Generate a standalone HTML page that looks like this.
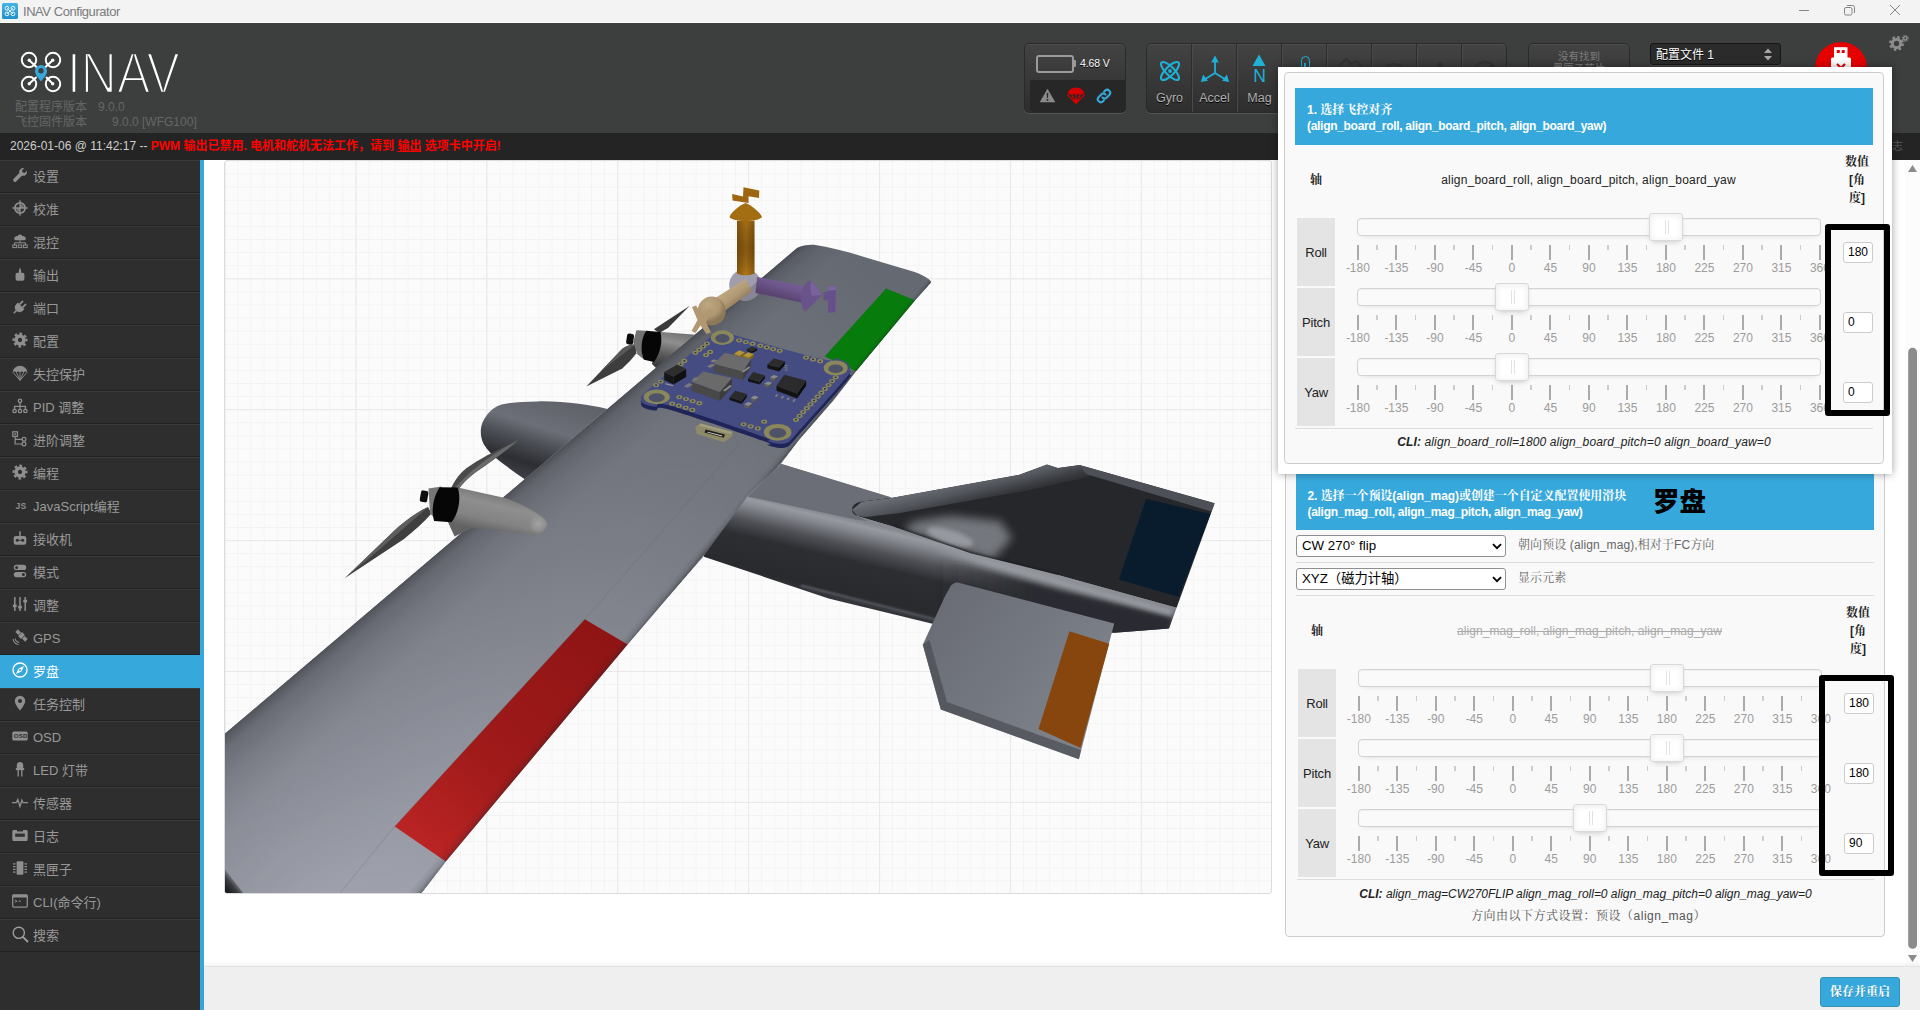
<!DOCTYPE html>
<html lang="zh-CN">
<head>
<meta charset="utf-8">
<title>INAV Configurator</title>
<style>
*{box-sizing:border-box;margin:0;padding:0}
html,body{width:1920px;height:1010px;overflow:hidden;background:#fff}
body{position:relative;font-family:"Liberation Sans","Noto Sans CJK SC",sans-serif;font-size:12px;color:#222}
.abs{position:absolute}
.serif{font-family:"Liberation Sans","Noto Serif CJK SC",serif}
/* title bar */
#titlebar{left:0;top:0;width:1920px;height:23px;background:#f3f3f3;border-bottom:1px solid #fff}
#titlebar .ttl{left:23px;top:1px;height:22px;line-height:22px;font-size:13px;letter-spacing:-.45px;color:#7b7b7b;white-space:nowrap}
/* header */
#header{left:0;top:23px;width:1920px;height:110px;background:#3d3f3e;overflow:hidden}
#log{left:0;top:133px;width:1920px;height:27px;background:#242424;overflow:hidden}
#log .t{left:10px;top:1px;line-height:25px;font-size:12px;color:#cfcfcf;white-space:nowrap}
#log .t b{color:#f00;font-weight:bold}

#inavtxt{left:66.500px;top:19.500px;font-size:58px;line-height:60px;color:#fff;letter-spacing:0;-webkit-text-stroke:2.400px #3d3f3e;paint-order:fill stroke;white-space:nowrap;transform:scaleX(.86);transform-origin:0 0}
.ver{font-size:12px;line-height:15px;color:#666;white-space:nowrap}
.hbox{border-radius:5px;background:linear-gradient(#434343,#2e2e2e);border:1px solid #2a2a2a;box-shadow:0 1px 0 rgba(255,255,255,.12),inset 0 1px 0 rgba(255,255,255,.06)}
.sep{top:0;width:2px;height:68px;background:#2c2c2c;border-right:1px solid #4a4a4a}
.slbl{top:47px;width:45px;text-align:center;font-size:12.500px;color:#b0b0b0;text-shadow:0 1px #000;line-height:15px}
/*PCSS_START*/
/* panels */
.gbox{border:1px solid #ccc;border-radius:4px;background:#f9f9f9}
.bluehd{background:#37a8db}
.hdtxt{color:#fff;font-weight:bold;font-size:12px;line-height:16.200px;white-space:nowrap;letter-spacing:-.3px}
.hline{height:1px;background:#ddd}
.thb{font-weight:bold;font-size:12px;line-height:18px;text-align:center;color:#222}
.thm{font-size:12px;line-height:18px;text-align:center;color:#222;white-space:nowrap;letter-spacing:.06px}
.lcell{height:68px;background:#e4e4e4;line-height:70px;text-align:center;font-size:13px;color:#222;letter-spacing:-.2px}
.track{height:18px;border:1px solid #d3d3d3;border-radius:4px;background:#fafafa;box-shadow:inset 0 1px 1px #f0f0f0,0 3px 6px -5px #bbb}
.ticks{width:1px;height:1px}
.ticks i{position:absolute;top:0;display:block}
.ticks i.mj{width:2px;height:15px;background:#aaa}
.ticks i.mn{width:1.600px;height:5px;background:#ccc}
.ticks span{position:absolute;top:17px;width:40px;text-align:center;font-size:12px;line-height:12px;color:#9c9c9c}
.handle{width:33.500px;height:27.500px;border:1px solid #d9d9d9;border-radius:3px;background:#fff;box-shadow:inset 0 0 1px #fff,inset 0 1px 7px #ebebeb,0 3px 6px -3px #bbb}
.handle i{position:absolute;left:14.500px;top:6px;width:1px;height:14px;background:#e3e3e3}
.inp{width:30px;height:21.500px;border:1px solid #ccc;border-radius:3px;background:#fff;font-size:12px;line-height:19px;padding-left:4px;color:#000}
.cli{font-style:italic;font-size:12px;line-height:17px;text-align:center;white-space:nowrap;color:#222;letter-spacing:.13px}
.note{font-size:12px;line-height:17px;text-align:center;color:#555;white-space:nowrap;letter-spacing:.5px}
.blackrect{border:6px solid #000;border-radius:3px}
.sel{width:210px;height:22px;border:1px solid #8f8f8f;border-radius:3px;background:#fff;font-size:13.300px;line-height:20px;padding-left:5px;color:#000;white-space:nowrap}
.sellbl{font-size:12px;line-height:18px;color:#666;white-space:nowrap;letter-spacing:.1px}
#bigann{left:1653px;top:483px;font-size:26.500px;line-height:38px;font-weight:900;color:#000;white-space:nowrap}
#popup{background:#fff;box-shadow:0 0 8px rgba(0,0,0,.38)}
/*PCSS_END*/
.wl{left:0;top:0;width:1920px;height:1010px}
/* sidebar */
#side{left:0;top:160px;width:200px;height:850px;background:#2e2e2e}
#side ul{list-style:none}
#side li{height:33px;border-top:1px solid #3b3b3b;border-bottom:1px solid #222;position:relative;color:#999;font-size:13px;line-height:31px;padding-left:33px;white-space:nowrap}
#side li.act{background:#37a8db;color:#fff;border-top-color:#37a8db;border-bottom-color:#37a8db}
#side li svg{position:absolute;left:12.300px;top:6.200px;width:16px;height:16px;overflow:visible}
#stripe{left:200px;top:160px;width:4px;height:850px;background:#37a8db}
/* content */
#content{left:204px;top:160px;width:1716px;height:806px;background:#fff;overflow:hidden}
#footer{left:204px;top:966px;width:1716px;height:44px;background:#efefef;border-top:1px solid #e4e4e4;box-shadow:0 -2px 4px rgba(0,0,0,.06)}
#savebtn{left:1820px;top:977px;width:80px;height:30px;background:#37a8db;border:1px solid #3394b5;border-radius:3px;color:#fff;font-weight:bold;font-size:12px;line-height:28px;text-align:center;text-shadow:0 1px rgba(0,0,0,.25)}
</style>
</head>
<body>
<!-- TITLEBAR -->
<div id="titlebar" class="abs">
  <svg class="abs" style="left:2px;top:3px" width="16" height="16" viewBox="0 0 16 16"><defs><linearGradient id="tig" x1="0" y1="0" x2="0" y2="1"><stop offset="0" stop-color="#45b4e6"/><stop offset="1" stop-color="#1f8fcb"/></linearGradient></defs><rect width="16" height="16" rx="1.5" fill="url(#tig)"/><g fill="none" stroke="#e8f6fd" stroke-width="1"><circle cx="5" cy="5.3" r="1.9"/><circle cx="11" cy="5.3" r="1.9"/><circle cx="5" cy="10.9" r="1.9"/><circle cx="11" cy="10.9" r="1.9"/><path d="M5 5.3 11 10.9M11 5.3 5 10.9"/></g></svg>
  <div class="abs ttl">INAV Configurator</div>
  <svg class="abs" style="left:1790px;top:0" width="130" height="22" viewBox="0 0 130 22" fill="none" stroke="#858585" stroke-width="1"><path d="M9 10.5h10"/><rect x="54.5" y="7.5" width="7.5" height="7.5" rx="1.5"/><path d="M57 5.5h5.5a2 2 0 0 1 2 2V13"/><path d="M100 5l10 10M110 5l-10 10"/></svg>
</div>
<!-- HEADER -->
<div id="header" class="abs">
  <!-- logo -->
  <svg class="abs" style="left:18px;top:26px" width="48" height="48" viewBox="0 0 48 48" fill="none" stroke="#fff" stroke-width="2">
    <circle cx="11" cy="11" r="7.2"/><circle cx="35" cy="11" r="7.2"/><circle cx="11" cy="35" r="7.2"/><circle cx="35" cy="35" r="7.2"/>
    <path d="M11.5 11.5 19 18.5M34.500 11.500 27.500 18M11.500 34.500 18 28.500M34.500 34.500 28.500 28.500" stroke-linecap="round"/>
    <circle cx="11.300" cy="11.300" r="1.700" fill="#fff" stroke="none"/><circle cx="34.700" cy="11.300" r="1.700" fill="#fff" stroke="none"/><circle cx="11.300" cy="34.700" r="1.700" fill="#fff" stroke="none"/><circle cx="34.700" cy="34.700" r="1.700" fill="#fff" stroke="none"/>
    <path d="M23 32.500c-3.200-4.200-6-7.200-6-10.600a6 6 0 0 1 12 0c0 3.400-2.800 6.400-6 10.600z" fill="#37a8db" stroke="none"/><circle cx="23" cy="21.800" r="2.700" fill="#3d3f3e" stroke="none"/>
  </svg>
  <div class="abs" id="inavtxt">INAV</div>
  <div class="abs ver" style="left:15px;top:77px">配置程序版本<span style="margin-left:11px">9.0.0</span></div>
  <div class="abs ver" style="left:15px;top:92px">飞控固件版本<span style="margin-left:25px">9.0.0 [WFG100]</span></div>
  <!-- battery box -->
  <div class="abs hbox" style="left:1024px;top:20px;width:102px;height:70px">
    <div class="abs" style="left:5px;top:36px;width:96px;height:32px;background:#272727;border-radius:0 0 4px 4px"></div>
    <div class="abs" style="left:11px;top:11px;width:38px;height:18px;border:2px solid #9a9a9a;border-radius:3px"></div>
    <div class="abs" style="left:49px;top:16px;width:2px;height:7px;background:#9a9a9a;border-radius:0 1px 1px 0"></div>
    <div class="abs" style="left:55px;top:13px;font-size:10.500px;color:#fff;text-shadow:0 1px #000;letter-spacing:-.1px;white-space:nowrap">4.68 V</div>
    <svg class="abs" style="left:14px;top:44px" width="17" height="15" viewBox="0 0 17 15"><path d="M8.500.8 16.300 14.200H.7z" fill="#8a8a8a"/><path d="M7.700 5h1.600l-.3 5h-1zM7.700 11h1.600v1.700H7.700z" fill="#272727"/></svg>
    <svg class="abs" style="left:42px;top:43px" width="18" height="17" viewBox="0 0 18 17"><path d="M.6 7.800A8.400 7.400 0 0 1 17.400 7.800Q15.300 6.500 13.200 7.800 11.100 6.500 9 7.800 6.900 6.500 4.800 7.800 2.700 6.500 .6 7.800z" fill="#d40000"/><path d="M.6 7.800 9 16.500 17.400 7.800M4.800 7.800 9 16.500 13.200 7.800M9 7.800v8.700" stroke="#d40000" stroke-width="1.200" fill="none"/><path d="M9 16.500 6.500 12.500h5z" fill="#d40000"/></svg>
    <svg class="abs" style="left:71px;top:44px" width="16" height="16" viewBox="0 0 16 16" fill="none" stroke="#37a8db" stroke-width="2" stroke-linecap="round"><path d="M6.500 9.500a3 3 0 0 0 4.300 0l2.500-2.500a3 3 0 0 0-4.300-4.300l-1 1"/><path d="M9.500 6.500a3 3 0 0 0-4.300 0l-2.500 2.500a3 3 0 0 0 4.300 4.300l1-1"/></svg>
  </div>
  <!-- sensors -->
  <div class="abs hbox" style="left:1146px;top:20px;width:361px;height:70px">
    <div class="abs sep" style="left:44px"></div><div class="abs sep" style="left:89px"></div><div class="abs sep" style="left:134px"></div><div class="abs sep" style="left:179px"></div><div class="abs sep" style="left:224px"></div><div class="abs sep" style="left:269px"></div><div class="abs sep" style="left:314px"></div>
    <svg class="abs" style="left:10px;top:14px" width="26" height="26" viewBox="0 0 26 26" fill="none" stroke="#1fb0d8" stroke-width="2.100"><ellipse cx="13" cy="13" rx="4.400" ry="12" transform="rotate(45 13 13)"/><ellipse cx="13" cy="13" rx="4.200" ry="12" transform="rotate(-45 13 13)"/><circle cx="13" cy="13" r="1.900" fill="#1fb0d8" stroke="none"/></svg>
    <svg class="abs" style="left:53px;top:11px" width="30" height="30" viewBox="0 0 30 30" fill="#1fb0d8" stroke="#1fb0d8"><path d="M15 5v13M15 18 4.500 24.500M15 18l10.500 6.500" stroke-width="1.800" fill="none"/><path d="M15 .5l3.800 7h-7.600zM.8 27l2.300-7.600 4.900 6.300zM29.200 27l-7.200-1.300 4.900-6.300z" stroke="none"/></svg>
    <svg class="abs" style="left:104px;top:10px" width="16" height="13" viewBox="0 0 16 13"><path d="M8 .5 14.500 12h-13z" fill="#1fb0d8"/></svg>
    <div class="abs" style="left:90px;top:23px;width:45px;text-align:center;font-size:17.500px;color:#1fb0d8;line-height:18px">N</div>
    <div class="abs slbl" style="left:0">Gyro</div><div class="abs slbl" style="left:45px">Accel</div><div class="abs slbl" style="left:90px">Mag</div>
    <div class="abs" style="left:153.500px;top:12px;width:9px;height:22px;border:1.600px solid #1fb0d8;border-radius:5px"></div><div class="abs" style="left:157.400px;top:19px;width:1.400px;height:12px;background:#1fb0d8"></div>
    <svg class="abs" style="left:180px;top:7px" width="181" height="30" viewBox="0 0 181 30" fill="none" stroke="#343434" stroke-width="2"><path d="M13 14l6-6 5 5 5-3 5 5"/><circle cx="67" cy="23" r="10"/><circle cx="67" cy="23" r="5"/><circle cx="113" cy="14" r="2" fill="#343434"/><path d="M107 22h12"/><circle cx="158" cy="22" r="11"/><path d="M150 28 166 14" stroke-width="3"/></svg>
  </div>
  <!-- blackbox -->
  <div class="abs hbox" style="left:1528px;top:20px;width:102px;height:70px">
    <div class="abs" style="left:0;top:6px;width:100px;text-align:center;font-size:10.500px;line-height:12px;color:#7d7d7d">没有找到<br>黑匣子芯片</div>
  </div>
  <!-- profile select -->
  <div class="abs" style="left:1650px;top:20px;width:131px;height:22px;background:#2b2b2b;border:1px solid #161616;border-radius:3px;box-shadow:0 1px 0 rgba(255,255,255,.08);color:#fff;font-size:12px;line-height:22px;padding-left:5px;text-shadow:0 1px #000">配置文件 1
    <svg class="abs" style="left:112px;top:4px" width="10" height="13" viewBox="0 0 10 13" fill="#a8a8a8"><path d="M5 .5 9 5H1zM5 12.500 9 8H1z"/></svg>
  </div>
  <!-- connect -->
  <div class="abs" style="left:1815px;top:19px;width:52px;height:52px;border-radius:26px;background:#e60000"></div>
  <svg class="abs" style="left:1829px;top:23px" width="24" height="34" viewBox="0 0 24 34"><rect x="5" y="1.200" width="13.500" height="11" fill="#fff"/><rect x="7.800" y="4" width="3" height="3" fill="#e60000"/><rect x="12.700" y="4" width="3" height="3" fill="#e60000"/><rect x="2" y="11.500" width="20" height="22" rx="1.500" fill="#fff"/><path d="M8 18l8 8M16 18l-8 8" stroke="#e60000" stroke-width="2.200"/></svg>
  <!-- gear -->
  <svg class="abs" style="left:1888px;top:11px" width="22" height="18" viewBox="0 0 22 18"><g fill="none" stroke="#8c8c8c"><circle cx="8.500" cy="9.500" r="4.200" stroke-width="3"/><circle cx="8.500" cy="9.500" r="6.300" stroke-width="2.400" stroke-dasharray="2.500 2.450"/><circle cx="17.300" cy="4.300" r="1.700" stroke-width="1.400"/><circle cx="17.300" cy="4.300" r="2.800" stroke-width="1.200" stroke-dasharray="1.100 1.100"/></g></svg>
</div>
<!-- LOG -->
<div id="log" class="abs"><div class="abs t">2026-01-06 @ 11:42:17 -- <b>PWM 输出已禁用. 电机和舵机无法工作，请到 <u>输出</u> 选项卡中开启!</b></div><div class="abs" style="right:17px;top:1px;line-height:25px;font-size:11px;color:#5c5c5c;white-space:nowrap">显示日志</div></div>
<!-- SIDEBAR -->
<div id="side" class="abs"><ul>
<li><svg viewBox="0 0 16 16"><path fill="#8f8f8f" d="M14.900 3.700 12.700 5.900 10.600 5.400 10.100 3.300 12.300 1.100A4.100 4.100 0 0 0 7.300 6.100L1.500 11.900a1.550 1.550 0 0 0 0 2.200l.4.4a1.550 1.550 0 0 0 2.200 0L9.900 8.700a4.100 4.100 0 0 0 5-5z"/></svg>设置</li>
<li><svg viewBox="0 0 16 16"><g fill="none" stroke="#8f8f8f"><circle cx="8" cy="8" r="5.200" stroke-width="1.700"/><path d="M8 .3v15.400M.3 8h15.400" stroke-width="1.300"/></g><path fill="#8f8f8f" d="M8 8V4.200A3.800 3.800 0 0 1 11.800 8zM8 8v3.800A3.800 3.800 0 0 1 4.200 8z" opacity=".75"/></svg>校准</li>
<li><svg viewBox="0 0 16 16"><path fill="#8f8f8f" d="M8 1.500a2.600 2.600 0 0 1 2.500 1.700 2.300 2.300 0 0 1 2 .3 2.300 2.300 0 0 1 .6 3.700H2.900a2.300 2.300 0 0 1 .6-3.700 2.300 2.300 0 0 1 2-.3A2.600 2.600 0 0 1 8 1.500z"/><path fill="none" stroke="#8f8f8f" stroke-width="1" d="M8 7.200v2.600M2.500 12V9.800h11V12"/><g fill="none" stroke="#8f8f8f" stroke-width="1"><rect x=".8" y="12" width="3.600" height="2.600"/><rect x="6.200" y="12" width="3.600" height="2.600"/><rect x="11.600" y="12" width="3.600" height="2.600"/></g></svg>混控</li>
<li><svg viewBox="0 0 16 16"><path fill="#8f8f8f" d="M8 1.300 9.100 4.500V7H6.900V4.500z"/><rect x="3.600" y="6.800" width="8.800" height="8" rx="1.800" fill="#8f8f8f"/></svg>输出</li>
<li><svg viewBox="0 0 16 16"><g transform="rotate(45 8 8)" fill="#8f8f8f"><path d="M3.300 6.500h9.400v2.200a4.700 4.700 0 0 1-9.400 0z"/><rect x="5" y="1.500" width="1.700" height="5.200" rx=".6"/><rect x="9.300" y="1.500" width="1.700" height="5.200" rx=".6"/><rect x="7.200" y="13" width="1.600" height="3.800"/></g></svg>端口</li>
<li><svg viewBox="0 0 16 16"><circle cx="8" cy="8" r="3.900" fill="none" stroke="#8f8f8f" stroke-width="3.500"/><circle cx="8" cy="8" r="6.400" fill="none" stroke="#8f8f8f" stroke-width="2.200" stroke-dasharray="2.600 2.427" transform="rotate(-12 8 8)"/></svg>配置</li>
<li><svg viewBox="0 0 16 16"><path fill="#8f8f8f" d="M.8 7.200A7.200 6.400 0 0 1 15.200 7.200Q13.400 6 11.600 7.200 9.800 6 8 7.200 6.200 6 4.400 7.200 2.600 6 .8 7.200z"/><path fill="none" stroke="#8f8f8f" stroke-width=".9" d="M.8 7.200 8 15.300 15.200 7.200M4.400 7.200 8 15.300 11.600 7.200M8 7.200v8"/></svg>失控保护</li>
<li><svg viewBox="0 0 16 16"><g fill="none" stroke="#8f8f8f" stroke-width="1.300"><circle cx="8" cy="2.800" r="1.700"/><circle cx="2.600" cy="13" r="1.700"/><circle cx="8" cy="13" r="1.700"/><circle cx="13.400" cy="13" r="1.700"/><path d="M8 4.500v6.800M2.600 11.300V8.300h10.800v3"/></g></svg>PID 调整</li>
<li><svg viewBox="0 0 16 16"><g fill="none" stroke="#8f8f8f" stroke-width="1.200"><rect x=".8" y=".8" width="4.600" height="4.600"/><path d="M3.100 5.400V13h7M3.100 8.300H10"/><circle cx="12" cy="8.300" r="1.900"/><circle cx="12" cy="13" r="1.900"/></g><rect x="2.300" y="2.300" width="1.600" height="1.600" fill="#8f8f8f"/></svg>进阶调整</li>
<li><svg viewBox="0 0 16 16"><circle cx="8" cy="8" r="3.900" fill="none" stroke="#8f8f8f" stroke-width="3.500"/><circle cx="8" cy="8" r="6.400" fill="none" stroke="#8f8f8f" stroke-width="2.200" stroke-dasharray="2.600 2.427" transform="rotate(-12 8 8)"/></svg>编程</li>
<li><svg viewBox="0 0 16 16"><text x="3.500" y="12" font-family="Liberation Sans,sans-serif" font-size="8.500" font-weight="bold" fill="#8f8f8f" letter-spacing=".3">JS</text></svg>JavaScript编程</li>
<li><svg viewBox="0 0 16 16"><rect x="1.700" y="6" width="12.600" height="8.700" rx="2.200" fill="#8f8f8f"/><path d="M8 6V1.200" stroke="#8f8f8f" stroke-width="1.500"/><circle cx="5.300" cy="10.300" r="1.500" fill="#2e2e2e"/><circle cx="10.700" cy="10.300" r="1.500" fill="#2e2e2e"/><path d="M5.300 10.300h5.400" stroke="#2e2e2e" stroke-width=".8"/></svg>接收机</li>
<li><svg viewBox="0 0 16 16"><rect x="1.800" y="1.800" width="12.400" height="5.200" rx="2.600" fill="#8f8f8f"/><rect x="1.800" y="9" width="12.400" height="5.200" rx="2.600" fill="#8f8f8f"/><circle cx="4.600" cy="4.400" r="1.500" fill="#2e2e2e"/><circle cx="11.400" cy="11.600" r="1.500" fill="#2e2e2e"/></svg>模式</li>
<li><svg viewBox="0 0 16 16"><g stroke="#8f8f8f" stroke-width="1.500"><path d="M2.800 1v14M8 1v14M13.200 1v14"/></g><g fill="#8f8f8f"><rect x=".9" y="8.600" width="3.800" height="2.600"/><rect x="6.100" y="9.800" width="3.800" height="2.600"/><rect x="11.300" y="3.800" width="3.800" height="2.600"/></g></svg>调整</li>
<li><svg viewBox="0 0 16 16"><g transform="rotate(45 9.500 6.500)" fill="#8f8f8f"><rect x="7.500" y="3.700" width="4" height="5.600"/><rect x="2.600" y="4.700" width="4.300" height="3.600"/><rect x="12.100" y="4.700" width="4.300" height="3.600"/></g><g fill="none" stroke="#8f8f8f" stroke-width="1.100"><path d="M3.200 9.400a4 4 0 0 0 4 4M1.200 10a5.600 5.600 0 0 0 5.500 5.500"/></g></svg>GPS</li>
<li class="act"><svg viewBox="0 0 16 16"><circle cx="8" cy="8" r="7" fill="none" stroke="#fff" stroke-width="1.400"/><path fill="#fff" d="M12 4 9.400 9.400 4 12 6.600 6.600z"/><circle cx="8" cy="8" r="1" fill="#37a8db"/></svg>罗盘</li>
<li><svg viewBox="0 0 16 16"><path fill="#8f8f8f" d="M8 .8a5.200 5.200 0 0 1 5.200 5.200c0 3.600-5.200 9.600-5.200 9.600S2.800 9.600 2.800 6A5.200 5.200 0 0 1 8 .8z"/><circle cx="8" cy="6" r="2.100" fill="#2e2e2e"/></svg>任务控制</li>
<li><svg viewBox="0 0 16 16"><rect x=".3" y="3.600" width="15.400" height="9" rx="1.600" fill="#8f8f8f"/><text x="1.700" y="10.300" font-family="Liberation Sans,sans-serif" font-size="6.200" font-weight="bold" fill="#2e2e2e" letter-spacing=".2">OSD</text></svg>OSD</li>
<li><svg viewBox="0 0 16 16"><path fill="#8f8f8f" d="M4.800 7V4.300a3.200 3.200 0 0 1 6.400 0V7z"/><rect x="3.800" y="7" width="8.400" height="2.100" fill="#8f8f8f"/><path d="M6.200 9v6.500M9.800 9v6.500" stroke="#8f8f8f" stroke-width="1.300"/></svg>LED 灯带</li>
<li><svg viewBox="0 0 16 16"><path fill="none" stroke="#8f8f8f" stroke-width="1.300" d="M0 8.700h4.300l1.500-3.200 2.200 7 1.900-6.300 1.100 2.500H16"/></svg>传感器</li>
<li><svg viewBox="0 0 16 16"><path fill="#8f8f8f" d="M1.800 3h12.400a1.500 1.500 0 0 1 1.500 1.500v8a1.500 1.500 0 0 1-1.500 1.500H1.800A1.500 1.500 0 0 1 .3 12.500v-8A1.500 1.500 0 0 1 1.800 3z"/><rect x="3.200" y="6.600" width="9.600" height="3.200" fill="#2e2e2e"/><path d="M5.200 8.200h.1M8 8.200h.1M10.800 8.200h.1" stroke="#8f8f8f" stroke-width="1.600"/><rect x="5" y="3" width="6" height="1.400" fill="#2e2e2e"/></svg>日志</li>
<li><svg viewBox="0 0 16 16"><rect x="4.600" y="1.300" width="6.800" height="13.400" rx="1" fill="#8f8f8f"/><path stroke="#8f8f8f" stroke-width="1.200" d="M1 3.800h2.500M1 6.600h2.500M1 9.400h2.500M1 12.200h2.500M12.500 3.800H15M12.500 6.600H15M12.500 9.400H15M12.500 12.200H15"/></svg>黑匣子</li>
<li><svg viewBox="0 0 16 16"><rect x=".7" y="1.900" width="14.600" height="12.200" rx="1" fill="none" stroke="#8f8f8f" stroke-width="1.300"/><rect x=".7" y="1.900" width="14.600" height="2.600" fill="#8f8f8f"/><path fill="none" stroke="#8f8f8f" stroke-width="1" d="M3 7 5 8.200 3 9.400M6.500 8.200H9"/></svg>CLI(命令行)</li>
<li><svg viewBox="0 0 16 16"><circle cx="6.800" cy="6.800" r="5.600" fill="none" stroke="#a0a0a0" stroke-width="1.400"/><path d="M10.900 10.900 16 16" stroke="#a0a0a0" stroke-width="1.800"/></svg>搜索</li>
</ul></div>
<div id="stripe" class="abs"></div>
<!-- CONTENT -->
<div id="content" class="abs">
</div>
<!--PLANE_START--><div class="abs" id="canvas" style="left:224px;top:160px;width:1048px;height:733.500px;border:1px solid #dcdcdc;border-radius:3px;background:#fbfbfb;overflow:hidden"><div class="abs" style="left:-225px;top:-161px;width:1920px;height:1010px">
<svg class="abs" style="left:0;top:0" width="1920" height="1010" viewBox="0 0 1920 1010"><defs>
<pattern id="gmin" x="224.500" y="147.400" width="13.090" height="13.090" patternUnits="userSpaceOnUse"><path d="M0 0H13.090M0 0V13.090" stroke="#f1f1f1" stroke-width="1.300" fill="none"/></pattern>
<pattern id="gmaj" x="224.500" y="147.400" width="130.900" height="130.900" patternUnits="userSpaceOnUse"><path d="M0 0H130.900M0 0V130.900" stroke="#e9e9e9" stroke-width="2.200" fill="none"/></pattern>
<filter id="bl2" x="-20%" y="-20%" width="140%" height="140%"><feGaussianBlur stdDeviation="2.200"/></filter>
<filter id="bl1" x="-20%" y="-20%" width="140%" height="140%"><feGaussianBlur stdDeviation="1"/></filter>
<filter id="bl4" x="-30%" y="-30%" width="160%" height="160%"><feGaussianBlur stdDeviation="5"/></filter>
<linearGradient id="gnose" gradientUnits="userSpaceOnUse" x1="560" y1="398" x2="535" y2="478"><stop offset="0" stop-color="#5f6269"/><stop offset=".4" stop-color="#6c6f77"/><stop offset=".62" stop-color="#4a4c53"/><stop offset=".85" stop-color="#2c2e33"/><stop offset="1" stop-color="#3a3c42"/></linearGradient>
<linearGradient id="gboom" gradientUnits="userSpaceOnUse" x1="850" y1="519" x2="830.400" y2="601.700"><stop offset="0" stop-color="#85888e"/><stop offset=".05" stop-color="#979aa0"/><stop offset=".13" stop-color="#84878d"/><stop offset=".3" stop-color="#4f5157"/><stop offset=".48" stop-color="#2c2e32"/><stop offset=".86" stop-color="#292a2e"/><stop offset=".95" stop-color="#34363b"/><stop offset="1" stop-color="#2a2c30"/></linearGradient>
<linearGradient id="ghl" gradientUnits="userSpaceOnUse" x1="930" y1="0" x2="990" y2="0"><stop offset="0" stop-color="#999ca2" stop-opacity="0"/><stop offset="1" stop-color="#999ca2"/></linearGradient>
<clipPath id="cboom"><path d="M781 463.800L891.900 497.400L852 509.700L857 516L894.500 527L970.700 553.300L1057.900 575L1176.600 607.800L1169 628.500L1114.500 632.800L1040 630L933.500 624.100L828.600 598.400L703.900 556.800L700 545L747.400 496.400Z"/></clipPath>
<linearGradient id="gfinle" gradientUnits="userSpaceOnUse" x1="940" y1="484" x2="948" y2="516"><stop offset="0" stop-color="#6d7077"/><stop offset=".4" stop-color="#53565c"/><stop offset=".75" stop-color="#35373b"/><stop offset="1" stop-color="#26272b"/></linearGradient>
<clipPath id="cfin"><path d="M852 509.700C852.500 505 856 502.500 862 501.500L892.300 497.700L1018.600 474.900L1047 464.400L1057.900 467.900L1079.700 465L1214.700 503.200L1176.600 607.800L1057.900 575L970.700 553.300L894.500 527L857 516C854 514.500 852 512.500 852 509.700Z"/></clipPath>
<linearGradient id="gstab" gradientUnits="userSpaceOnUse" x1="940" y1="610" x2="1095" y2="720"><stop offset="0" stop-color="#6a6d75"/><stop offset=".5" stop-color="#747880"/><stop offset="1" stop-color="#7f838b"/></linearGradient>
<linearGradient id="gmot" gradientUnits="userSpaceOnUse" x1="680" y1="330" x2="672" y2="368"><stop offset="0" stop-color="#6d6d6d"/><stop offset=".35" stop-color="#8f8f8f"/><stop offset=".7" stop-color="#5a5a5a"/><stop offset="1" stop-color="#3c3c3c"/></linearGradient>
<linearGradient id="gpod" gradientUnits="userSpaceOnUse" x1="505" y1="495" x2="496" y2="534"><stop offset="0" stop-color="#767676"/><stop offset=".3" stop-color="#8f8f8f"/><stop offset=".7" stop-color="#828282"/><stop offset="1" stop-color="#626262"/></linearGradient>
<radialGradient id="gpodend" gradientUnits="userSpaceOnUse" cx="538" cy="524" r="10"><stop offset="0" stop-color="#a4a4a4"/><stop offset=".6" stop-color="#9a9a9a" stop-opacity=".6"/><stop offset="1" stop-color="#909090" stop-opacity="0"/></radialGradient>
<linearGradient id="gz" gradientUnits="userSpaceOnUse" x1="737" y1="0" x2="755" y2="0"><stop offset="0" stop-color="#8a5a0c"/><stop offset=".5" stop-color="#b0761a"/><stop offset="1" stop-color="#8a5a0c"/></linearGradient>
<linearGradient id="gzv" gradientUnits="userSpaceOnUse" x1="0" y1="215" x2="0" y2="275"><stop offset="0" stop-color="#000" stop-opacity="0"/><stop offset=".55" stop-color="#3a2400" stop-opacity=".35"/><stop offset="1" stop-color="#000" stop-opacity="0"/></linearGradient>
<linearGradient id="gy" gradientUnits="userSpaceOnUse" x1="782" y1="276" x2="776" y2="296"><stop offset="0" stop-color="#7a629a"/><stop offset=".5" stop-color="#6d568c"/><stop offset="1" stop-color="#58446f"/></linearGradient>
<linearGradient id="gx" gradientUnits="userSpaceOnUse" x1="722" y1="288" x2="736" y2="306"><stop offset="0" stop-color="#c4ac86"/><stop offset=".6" stop-color="#b29a74"/><stop offset="1" stop-color="#8e795a"/></linearGradient>
<radialGradient id="gxh" gradientUnits="userSpaceOnUse" cx="708" cy="305" r="17"><stop offset="0" stop-color="#bfa680"/><stop offset=".7" stop-color="#ad9670"/><stop offset="1" stop-color="#8d7858"/></radialGradient>
<linearGradient id="gred" gradientUnits="userSpaceOnUse" x1="600" y1="625" x2="420" y2="850"><stop offset="0" stop-color="#8f1414"/><stop offset=".6" stop-color="#a01a1a"/><stop offset="1" stop-color="#bb2424"/></linearGradient>
<linearGradient id="gtipc" gradientUnits="userSpaceOnUse" x1="226" y1="892" x2="240" y2="880"><stop offset="0" stop-color="#141517"/><stop offset=".5" stop-color="#3c3e43"/><stop offset="1" stop-color="#6c6f77" stop-opacity="0"/></linearGradient>
<linearGradient id="gdk" gradientUnits="userSpaceOnUse" x1="935" y1="0" x2="1030" y2="0"><stop offset="0" stop-color="#2a2c30" stop-opacity="0"/><stop offset="1" stop-color="#2a2c30"/></linearGradient>
</defs>
<rect x="225" y="161" width="1046" height="732" fill="url(#gmin)"/>
<rect x="225" y="161" width="1046" height="732" fill="url(#gmaj)"/>
<!-- nose -->
<path d="M607.400 409.100C598 406.500 588 405 578.800 403.800C565 402 550 401 537.200 401.400C525 401.800 512 402 501.600 404.400C495 406.500 490.500 410 487.300 414.500C483.500 419.500 481 424.500 480.800 429.900C480.600 435 481.500 440 483.800 444.200C487.500 450.500 493 456 499.200 460.800C507 466.800 516 473.200 524.800 479.200Z" fill="url(#gnose)"/>
<!-- boom -->
<g clip-path="url(#cboom)">
<rect x="690" y="440" width="500" height="210" fill="url(#gboom)"/>
<!-- tail part darkening below band -->
<path d="M930 556L960 564L1060 591L1172 618L1169 634L1040 634L930 632Z" fill="url(#gdk)" filter="url(#bl2)"/>
<!-- flat top -->
<path d="M781 463.800L891.900 497.400L852 509.700L857 516L868.200 521.200L854.300 519.200L747.400 496.400Z" fill="#6b6e76"/>
<!-- highlight -->
<path d="M930 546.500L960 554.800L1058 582L1172 612.500" stroke="url(#ghl)" stroke-width="6" fill="none" filter="url(#bl2)"/>
<path d="M800.800 585.500L937.400 620.100L1000 632" stroke="#7d828b" stroke-width="1.400" fill="none" filter="url(#bl1)" opacity=".8"/>
</g>
<!-- fin -->
<g clip-path="url(#cfin)">
<rect x="845" y="455" width="380" height="160" fill="#26272b"/>
<path d="M852 509.700L862 501.500L892.300 497.700L1018.600 474.900L1047 464.400L1057.900 467.900L1079.700 465L1092 476L1030 490L900 513L866 517L857 516Z" fill="url(#gfinle)"/>
<path d="M1079.700 465L1214.700 503.200L1211.500 511.500L1086 474Z" fill="#4d5056"/>
<path d="M903 530L953 547L992 560L1012 538L1000 521L950 516L915 521Z" fill="#7e8187" filter="url(#bl4)" opacity=".9"/><ellipse cx="950" cy="537" rx="24" ry="7" transform="rotate(17 950 537)" fill="#a0a3a9" filter="url(#bl2)" opacity=".8"/>
<path d="M894.500 527L970.700 553.300L1057.900 575" stroke="#1d1e21" stroke-width="2" fill="none" filter="url(#bl1)"/>
</g>
<path d="M1146.100 498.800L1210.400 514.100L1178.800 596.900L1118.900 579.400Z" fill="#081c2e"/>
<!-- stabilizer -->
<path d="M958.700 582.700C956 582 953.500 583 951 585.500L944.600 596.900L922.800 644.800L940.800 709.400L1078.900 759.200L1114.200 623.500Z" fill="url(#gstab)"/>
<path d="M922.800 644.800L940.800 709.400L1078.900 759.200L1081 750L947 702L929.500 640Z" fill="#4c4f56" opacity=".75"/>
<path d="M1069.400 631.200L1109.200 643.700L1080.500 748.100L1038.500 728.900Z" fill="#87460e"/>
<!-- motor 1 body -->
<path d="M658 331.700L696.400 334.700L700 338L660 372L652 364Z" fill="url(#gmot)"/>
</svg>
<div class="abs" style="left:0;top:0;width:1920px;height:1010px;clip-path:path('M225 733.5L797 248C802 245.500 808 244.600 813.700 244.800C830 247 848 252 864.200 256.900L914.700 272.100C920 274 925 276.500 928.200 278.800C930.500 280.500 931.500 282 930.700 283L914.700 300.700L855.800 371.400L833.900 400L798.900 440L781 463.800L747.400 496.400L702.500 557.600L665.600 600L627.600 644.600L445.800 861.400L422 892.600L420 894L224 894Z')">
<div class="abs wl" style="background:radial-gradient(circle at 1356px -227px,#656972 690px,#6b6f77 800px,#6f727a 960px,#73767e 1100px,#787b84 1300px,#7c7f88 1500px)"></div>
<div class="abs wl" style="background:conic-gradient(from 219.836deg at 1356px -227px,rgba(168,171,182,.95) 0deg,rgba(168,171,182,.85) 2.456deg,rgba(168,171,182,.6) 4.912deg,rgba(168,171,182,.3) 7.369deg,rgba(168,171,182,.1) 8.842deg,rgba(168,171,182,0) 9.825deg,rgba(168,171,182,0) 360deg);-webkit-mask-image:radial-gradient(circle at 1356px -227px,transparent 850px,rgba(0,0,0,.14) 1000px,rgba(0,0,0,.4) 1200px,rgba(0,0,0,.72) 1400px,rgba(0,0,0,.95) 1530px);mask-image:radial-gradient(circle at 1356px -227px,transparent 850px,rgba(0,0,0,.14) 1000px,rgba(0,0,0,.4) 1200px,rgba(0,0,0,.72) 1400px,rgba(0,0,0,.95) 1530px)"></div>
<svg class="abs" style="left:0;top:0" width="1920" height="1010" viewBox="0 0 1920 1010"><!-- stripes -->
<path d="M886.100 288.600L915.500 300.400L856.600 371.400L824.600 356.600Z" fill="#077c0c"/>
<path d="M584.800 619.300L627.600 644.600L445.800 861.400L394.700 826.400Z" fill="url(#gred)"/>
</svg>
<div class="abs wl" style="background:conic-gradient(from 219.836deg at 1356px -227px,rgba(30,32,38,.42) 0deg,rgba(30,32,38,.12) 0.196deg,rgba(30,32,38,0) 0.442deg,rgba(30,32,38,0) 7.074deg,rgba(30,32,38,.08) 8.449deg,rgba(30,32,38,.2) 9.333deg,rgba(30,32,38,.36) 9.677deg,rgba(30,32,38,.46) 9.825deg,rgba(30,32,38,0) 9.835deg,rgba(30,32,38,0) 360deg)"></div>
</div>
<svg class="abs" style="left:0;top:0" width="1920" height="1010" viewBox="0 0 1920 1010"><path d="M224 868L244 894L224 894Z" fill="url(#gtipc)"/>
<path d="M738.600 444.400L584.800 619.300L394.700 826.400L340 893" stroke="#5f626a" stroke-opacity=".18" stroke-width="1.200" fill="none"/>
<!-- motor 1 -->
<path d="M653.900 329.200L689.800 305.800L668 328.100L659.300 333Z" fill="#3a3a3a"/>
<path d="M586.300 386.400L622.300 348.800C627 345.500 631.500 344.300 635.400 344.500L636.400 353.200C632 359 627 364 622.300 368.400Z" fill="#3d3d3d"/>
<path d="M586.300 386.400L622.300 348.800C627 345.500 631.500 344.300 635.400 344.500L600 372Z" fill="#585858"/>
<rect x="626.600" y="333.600" width="7" height="11" rx="2" fill="#0c0c0c" transform="rotate(8 630 339)"/>
<path d="M636.400 330.300L646.300 330.800L644.100 359.700L637.500 354.300L633.200 342.300Z" fill="#727272"/>
<path d="M646.300 330.800L660.400 331.900C663 341 660 354 653.900 361.900L644.100 359.700C640 352 641 338 646.300 330.800Z" fill="#060606"/>
<!-- motor 2 -->
<path d="M457.600 487.600L505 498C520 503 535 511 543.700 518.800C547.500 522 548 525 546.700 526.200C544 531 540 534.500 534.800 535.100L499.100 530.700L472.400 527.700L454.600 536.600L447 520Z" fill="url(#gpod)"/>
<circle cx="537" cy="525" r="10" fill="url(#gpodend)"/>
<path d="M518.400 440C505 452 490 462 476 472C468 478 462 484 457.500 490.500L449 494C452 484 458 475 466 468.500C482 457 500 449 518.400 440Z" fill="#4a4a4a"/>
<path d="M518.400 440C505 452 490 462 476 472C468 478 462 484 457.500 490.500L455 488C470 470 495 452 518.400 440Z" fill="#6a6a6a"/>
<path d="M344.700 578.200L395 530C405 521 417 512 428 507L431.500 513.500C424 522 414 531 404 539Z" fill="#3f3f3f"/>
<path d="M344.700 578.200L395 530C405 521 417 512 428 507L380 549Z" fill="#5e5e5e"/>
<rect x="420.400" y="490.600" width="7.500" height="11.500" rx="2" fill="#0c0c0c" transform="rotate(10 424 496)"/>
<path d="M428.500 488.500L441.500 486.500L437 520.500L430 513.500Z" fill="#767676"/>
<path d="M439.700 487.200L457.600 487.600C461.500 498 458.500 513 451.600 522.300L434.200 521C431 511 433 497 439.700 487.200Z" fill="#060606"/>
<!-- usb -->
<path d="M695.4 426.8L700.5 423.6L732.7 432.0L732.0 436.5L723.7 442.3L696.6 433.9Z" fill="#8d8a6a"/>
<path d="M700.5 423.6L732.7 432.0L730.1 433.9L698.6 425.8Z" fill="#a09d7c"/>
<path d="M705.7 429.4L725.0 434.6L723.7 437.8L704.4 432.4Z" fill="#1d1d18"/>
<path d="M707.6 431.7L722.4 435.6L722.1 436.4L707.2 432.5Z" fill="#cfcfc4"/>
<!-- board -->
<path d="M712.1 337.0C714.2 335.9 719.0 335.1 722.4 335.1C725.8 335.0 730.1 335.9 732.7 336.7C735.3 337.6 722.8 335.8 737.8 340.2C752.9 344.7 806.5 359.6 822.8 363.4C839.1 367.1 831.6 362.1 835.7 362.7C839.8 363.4 844.9 365.3 847.3 367.2C849.6 369.2 850.0 371.9 849.8 374.3C849.6 376.8 855.2 371.1 846.0 382.0C836.7 393.0 804.1 429.3 794.5 440.0C784.8 450.7 790.6 445.1 788.0 446.4C785.5 447.7 782.5 448.2 779.0 448.0C775.6 447.7 770.2 446.4 767.4 445.1C764.7 443.9 778.6 446.5 762.3 440.6C746.0 434.7 687.4 414.7 669.6 409.7C651.8 404.7 659.7 411.0 655.4 410.6C651.2 410.3 646.2 409.1 643.9 407.8C641.5 406.5 640.6 404.9 641.3 402.6C641.9 400.4 636.4 404.5 647.7 394.3C659.1 384.1 698.8 351.0 709.5 341.5C720.2 332.0 709.9 338.1 712.1 337.0Z" fill="#1f2558"/>
<path d="M712.1 332.9C714.2 331.8 719.0 331.0 722.4 330.9C725.8 330.9 730.1 331.8 732.7 332.6C735.3 333.5 722.8 331.7 737.8 336.1C752.9 340.5 806.5 355.5 822.8 359.3C839.1 363.0 831.6 358.0 835.7 358.6C839.8 359.3 844.9 361.2 847.3 363.1C849.6 365.1 850.0 367.7 849.8 370.2C849.6 372.7 855.2 367.0 846.0 377.9C836.7 388.9 804.1 425.1 794.5 435.9C784.8 446.6 790.6 441.0 788.0 442.3C785.5 443.6 782.5 444.1 779.0 443.8C775.6 443.6 770.2 442.2 767.4 441.0C764.7 439.8 778.6 442.4 762.3 436.5C746.0 430.6 687.4 410.6 669.6 405.6C651.8 400.6 659.7 406.8 655.4 406.5C651.2 406.2 646.2 405.0 643.9 403.7C641.5 402.3 640.6 400.8 641.3 398.5C641.9 396.3 636.4 400.4 647.7 390.2C659.1 380.0 698.8 346.9 709.5 337.4C720.2 327.8 709.9 333.9 712.1 332.9Z" fill="#444c82"/>
<ellipse cx="722.4" cy="337.6" rx="11.6" ry="7.3" fill="#8a875a"/>
<ellipse cx="722.4" cy="338.4" rx="7.2" ry="4.3" fill="#4f5368"/>
<ellipse cx="835.7" cy="367.9" rx="12.0" ry="7.5" fill="#8a875a"/>
<ellipse cx="835.7" cy="368.7" rx="7.4" ry="4.3" fill="#4f5368"/>
<ellipse cx="777.7" cy="432.3" rx="13.8" ry="8.4" fill="#8a875a"/>
<ellipse cx="777.7" cy="433.0" rx="8.5" ry="4.9" fill="#4f5368"/>
<ellipse cx="656.7" cy="396.9" rx="13.1" ry="7.3" fill="#8a875a"/>
<ellipse cx="656.7" cy="397.6" rx="8.1" ry="4.3" fill="#4f5368"/>
<ellipse cx="739.1" cy="340.3" rx="3" ry="2.100" fill="#8a875a"/><ellipse cx="739.1" cy="340.3" rx="1.100" ry=".800" fill="#2c2f45"/>
<ellipse cx="745.8" cy="342.0" rx="3" ry="2.100" fill="#8a875a"/><ellipse cx="745.8" cy="342.0" rx="1.100" ry=".800" fill="#2c2f45"/>
<ellipse cx="752.5" cy="343.7" rx="3" ry="2.100" fill="#8a875a"/><ellipse cx="752.5" cy="343.7" rx="1.100" ry=".800" fill="#2c2f45"/>
<ellipse cx="760.4" cy="345.7" rx="3" ry="2.100" fill="#8a875a"/><ellipse cx="760.4" cy="345.7" rx="1.100" ry=".800" fill="#2c2f45"/>
<ellipse cx="766.8" cy="347.4" rx="3" ry="2.100" fill="#8a875a"/><ellipse cx="766.8" cy="347.4" rx="1.100" ry=".800" fill="#2c2f45"/>
<ellipse cx="773.2" cy="349.1" rx="3" ry="2.100" fill="#8a875a"/><ellipse cx="773.2" cy="349.1" rx="1.100" ry=".800" fill="#2c2f45"/>
<ellipse cx="779.7" cy="350.8" rx="3" ry="2.100" fill="#8a875a"/><ellipse cx="779.7" cy="350.8" rx="1.100" ry=".800" fill="#2c2f45"/>
<ellipse cx="806.1" cy="357.6" rx="3" ry="2.100" fill="#8a875a"/><ellipse cx="806.1" cy="357.6" rx="1.100" ry=".800" fill="#2c2f45"/>
<ellipse cx="813.1" cy="359.4" rx="3" ry="2.100" fill="#8a875a"/><ellipse cx="813.1" cy="359.4" rx="1.100" ry=".800" fill="#2c2f45"/>
<ellipse cx="820.2" cy="361.2" rx="3" ry="2.100" fill="#8a875a"/><ellipse cx="820.2" cy="361.2" rx="1.100" ry=".800" fill="#2c2f45"/>
<ellipse cx="835.7" cy="377.3" rx="3" ry="2.100" fill="#8a875a"/><ellipse cx="835.7" cy="377.3" rx="1.100" ry=".800" fill="#2c2f45"/>
<ellipse cx="832.1" cy="381.1" rx="3" ry="2.100" fill="#8a875a"/><ellipse cx="832.1" cy="381.1" rx="1.100" ry=".800" fill="#2c2f45"/>
<ellipse cx="828.5" cy="385.0" rx="3" ry="2.100" fill="#8a875a"/><ellipse cx="828.5" cy="385.0" rx="1.100" ry=".800" fill="#2c2f45"/>
<ellipse cx="824.9" cy="388.9" rx="3" ry="2.100" fill="#8a875a"/><ellipse cx="824.9" cy="388.9" rx="1.100" ry=".800" fill="#2c2f45"/>
<ellipse cx="821.3" cy="392.7" rx="3" ry="2.100" fill="#8a875a"/><ellipse cx="821.3" cy="392.7" rx="1.100" ry=".800" fill="#2c2f45"/>
<ellipse cx="817.7" cy="396.6" rx="3" ry="2.100" fill="#8a875a"/><ellipse cx="817.7" cy="396.6" rx="1.100" ry=".800" fill="#2c2f45"/>
<ellipse cx="814.0" cy="400.5" rx="3" ry="2.100" fill="#8a875a"/><ellipse cx="814.0" cy="400.5" rx="1.100" ry=".800" fill="#2c2f45"/>
<ellipse cx="810.4" cy="404.3" rx="3" ry="2.100" fill="#8a875a"/><ellipse cx="810.4" cy="404.3" rx="1.100" ry=".800" fill="#2c2f45"/>
<ellipse cx="806.8" cy="408.2" rx="3" ry="2.100" fill="#8a875a"/><ellipse cx="806.8" cy="408.2" rx="1.100" ry=".800" fill="#2c2f45"/>
<ellipse cx="803.2" cy="412.0" rx="3" ry="2.100" fill="#8a875a"/><ellipse cx="803.2" cy="412.0" rx="1.100" ry=".800" fill="#2c2f45"/>
<ellipse cx="799.6" cy="415.9" rx="3" ry="2.100" fill="#8a875a"/><ellipse cx="799.6" cy="415.9" rx="1.100" ry=".800" fill="#2c2f45"/>
<ellipse cx="796.0" cy="419.8" rx="3" ry="2.100" fill="#8a875a"/><ellipse cx="796.0" cy="419.8" rx="1.100" ry=".800" fill="#2c2f45"/>
<ellipse cx="706.9" cy="343.6" rx="3" ry="2.100" fill="#8a875a"/><ellipse cx="706.9" cy="343.6" rx="1.100" ry=".800" fill="#2c2f45"/>
<ellipse cx="703.1" cy="346.6" rx="3" ry="2.100" fill="#8a875a"/><ellipse cx="703.1" cy="346.6" rx="1.100" ry=".800" fill="#2c2f45"/>
<ellipse cx="699.2" cy="349.7" rx="3" ry="2.100" fill="#8a875a"/><ellipse cx="699.2" cy="349.7" rx="1.100" ry=".800" fill="#2c2f45"/>
<ellipse cx="695.4" cy="352.8" rx="3" ry="2.100" fill="#8a875a"/><ellipse cx="695.4" cy="352.8" rx="1.100" ry=".800" fill="#2c2f45"/>
<ellipse cx="710.2" cy="351.9" rx="3" ry="2.100" fill="#8a875a"/><ellipse cx="710.2" cy="351.9" rx="1.100" ry=".800" fill="#2c2f45"/>
<ellipse cx="706.0" cy="355.0" rx="3" ry="2.100" fill="#8a875a"/><ellipse cx="706.0" cy="355.0" rx="1.100" ry=".800" fill="#2c2f45"/>
<ellipse cx="684.4" cy="360.9" rx="3" ry="2.100" fill="#8a875a"/><ellipse cx="684.4" cy="360.9" rx="1.100" ry=".800" fill="#2c2f45"/>
<ellipse cx="680.6" cy="364.3" rx="3" ry="2.100" fill="#8a875a"/><ellipse cx="680.6" cy="364.3" rx="1.100" ry=".800" fill="#2c2f45"/>
<ellipse cx="660.6" cy="381.5" rx="3" ry="2.100" fill="#8a875a"/><ellipse cx="660.6" cy="381.5" rx="1.100" ry=".800" fill="#2c2f45"/>
<ellipse cx="656.1" cy="385.1" rx="3" ry="2.100" fill="#8a875a"/><ellipse cx="656.1" cy="385.1" rx="1.100" ry=".800" fill="#2c2f45"/>
<ellipse cx="679.3" cy="397.0" rx="3" ry="2.100" fill="#8a875a"/><ellipse cx="679.3" cy="397.0" rx="1.100" ry=".800" fill="#2c2f45"/>
<ellipse cx="686.0" cy="399.0" rx="3" ry="2.100" fill="#8a875a"/><ellipse cx="686.0" cy="399.0" rx="1.100" ry=".800" fill="#2c2f45"/>
<ellipse cx="692.7" cy="401.1" rx="3" ry="2.100" fill="#8a875a"/><ellipse cx="692.7" cy="401.1" rx="1.100" ry=".800" fill="#2c2f45"/>
<ellipse cx="699.3" cy="403.2" rx="3" ry="2.100" fill="#8a875a"/><ellipse cx="699.3" cy="403.2" rx="1.100" ry=".800" fill="#2c2f45"/>
<ellipse cx="672.2" cy="403.7" rx="3" ry="2.100" fill="#8a875a"/><ellipse cx="672.2" cy="403.7" rx="1.100" ry=".800" fill="#2c2f45"/>
<ellipse cx="678.9" cy="405.7" rx="3" ry="2.100" fill="#8a875a"/><ellipse cx="678.9" cy="405.7" rx="1.100" ry=".800" fill="#2c2f45"/>
<ellipse cx="685.6" cy="407.8" rx="3" ry="2.100" fill="#8a875a"/><ellipse cx="685.6" cy="407.8" rx="1.100" ry=".800" fill="#2c2f45"/>
<ellipse cx="692.3" cy="409.9" rx="3" ry="2.100" fill="#8a875a"/><ellipse cx="692.3" cy="409.9" rx="1.100" ry=".800" fill="#2c2f45"/>
<ellipse cx="743.6" cy="424.3" rx="3" ry="2.100" fill="#8a875a"/><ellipse cx="743.6" cy="424.3" rx="1.100" ry=".800" fill="#2c2f45"/>
<ellipse cx="750.7" cy="426.3" rx="3" ry="2.100" fill="#8a875a"/><ellipse cx="750.7" cy="426.3" rx="1.100" ry=".800" fill="#2c2f45"/>
<ellipse cx="757.8" cy="428.4" rx="3" ry="2.100" fill="#8a875a"/><ellipse cx="757.8" cy="428.4" rx="1.100" ry=".800" fill="#2c2f45"/>
<ellipse cx="764.2" cy="421.7" rx="3" ry="2.100" fill="#8a875a"/><ellipse cx="764.2" cy="421.7" rx="1.100" ry=".800" fill="#2c2f45"/>
<!-- components -->
<path d="M734.0 353.7L739.8 356.0L739.8 358.9L734.0 356.6Z" fill="#8a6f1f"/><path d="M739.8 356.0L744.9 352.2L744.9 355.0L739.8 358.9Z" fill="#7a621a"/><path d="M734.0 353.7L739.1 350.3L744.9 352.2L739.8 356.0Z" fill="#b39433"/>
<path d="M743.0 355.8L748.8 358.0L748.8 360.8L743.0 358.6Z" fill="#8a6f1f"/><path d="M748.8 358.0L753.9 354.1L753.9 356.9L748.8 360.8Z" fill="#7a621a"/><path d="M743.0 355.8L748.1 352.2L753.9 354.1L748.8 358.0Z" fill="#b39433"/>
<path d="M746.8 349.0L751.7 351.2L751.7 353.2L746.8 351.0Z" fill="#151515"/><path d="M751.7 351.2L757.1 348.3L757.1 350.4L751.7 353.2Z" fill="#101010"/><path d="M746.8 349.0L752.0 346.4L757.1 348.3L751.7 351.2Z" fill="#2c2c2c"/>
<path d="M713.4 363.8L743.0 371.5L743.0 379.9L713.4 372.1Z" fill="#4a4a4a"/><path d="M743.0 371.5L750.7 359.3L750.7 367.6L743.0 379.9Z" fill="#3e3e3e"/><path d="M713.4 363.8L725.0 352.8L750.7 359.3L743.0 371.5Z" fill="#6b6b6b"/>
<path d="M706.9 366.3L712.1 363.8L715.3 365.1L710.2 367.9Z" fill="#7a7a7a"/>
<path d="M710.2 361.2L714.0 359.3L717.2 360.6L713.4 362.5Z" fill="#8a7f78"/>
<path d="M691.5 381.8L719.8 392.1L719.8 401.1L691.5 390.8Z" fill="#484848"/><path d="M719.8 392.1L732.0 377.9L732.0 386.9L719.8 401.1Z" fill="#3c3c3c"/><path d="M691.5 381.8L703.1 371.5L732.0 377.9L719.8 392.1Z" fill="#6a6a6a"/>
<path d="M683.8 386.3L688.9 383.1L692.8 384.4L687.6 387.8Z" fill="#787878"/>
<path d="M691.5 379.9L695.4 377.3L698.6 378.6L694.7 381.1Z" fill="#787878"/>
<path d="M723.0 390.5L730.1 385.0L732.0 385.9L725.0 391.6Z" fill="#8a8a8a"/>
<path d="M741.7 371.5L748.8 366.6L750.5 367.4L743.4 372.5Z" fill="#8a8a8a"/>
<path d="M664.2 372.1L673.5 376.6L673.5 384.6L664.2 380.1Z" fill="#161616"/><path d="M673.5 376.6L686.1 368.9L686.1 376.9L673.5 384.6Z" fill="#101010"/><path d="M664.2 372.1L677.3 364.4L686.1 368.9L673.5 376.6Z" fill="#2d2d2d"/>
<path d="M665.1 383.1L672.8 385.0L673.5 386.3L665.7 384.4Z" fill="#9a9a9a"/>
<path d="M776.5 385.7L797.1 393.4L797.1 398.5L776.5 390.8Z" fill="#131313"/><path d="M797.1 393.4L806.1 380.5L806.1 385.7L797.1 398.5Z" fill="#0d0d0d"/><path d="M776.5 385.7L784.2 374.7L806.1 380.5L797.1 393.4Z" fill="#2b2b2b"/>
<path d="M776.5 394.0L778.4 394.5L776.7 397.0L774.8 396.5Z" fill="#7e7e7e"/>
<path d="M782.3 395.7L784.2 396.2L782.5 398.7L780.6 398.1Z" fill="#7e7e7e"/>
<path d="M788.0 397.4L790.0 397.9L788.3 400.3L786.4 399.8Z" fill="#7e7e7e"/>
<path d="M793.8 399.0L795.8 399.6L794.1 402.0L792.2 401.5Z" fill="#7e7e7e"/>
<path d="M767.4 364.4L779.0 367.6L779.0 371.5L767.4 368.3Z" fill="#131313"/><path d="M779.0 367.6L784.8 361.2L784.8 365.1L779.0 371.5Z" fill="#0d0d0d"/><path d="M767.4 364.4L773.9 358.6L784.8 361.2L779.0 367.6Z" fill="#2b2b2b"/>
<path d="M784.8 364.8L787.8 365.6L787.4 366.6L784.4 365.8Z" fill="#7e7e7e"/>
<path d="M784.8 367.0L787.8 367.8L787.4 368.8L784.4 368.0Z" fill="#7e7e7e"/>
<path d="M784.8 369.2L787.8 369.9L787.4 371.0L784.4 370.2Z" fill="#7e7e7e"/>
<path d="M748.1 378.6L759.7 381.8L759.7 384.6L748.1 381.4Z" fill="#131313"/><path d="M759.7 381.8L764.9 375.4L764.9 378.2L759.7 384.6Z" fill="#0d0d0d"/><path d="M748.1 378.6L753.3 372.1L764.9 375.4L759.7 381.8Z" fill="#2b2b2b"/>
<path d="M729.5 397.2L741.7 401.1L741.7 403.9L729.5 400.1Z" fill="#131313"/><path d="M741.7 401.1L746.8 394.0L746.8 396.9L741.7 403.9Z" fill="#0d0d0d"/><path d="M729.5 397.2L735.3 390.8L746.8 394.0L741.7 401.1Z" fill="#2b2b2b"/>
<path d="M770.0 377.3L774.5 378.8L774.5 381.7L770.0 380.1Z" fill="#5e5e5e"/><path d="M774.5 378.8L778.0 376.3L778.0 379.1L774.5 381.7Z" fill="#505050"/><path d="M770.0 377.3L773.6 375.0L778.0 376.3L774.5 378.8Z" fill="#8b8b8b"/>
<path d="M764.2 383.7L768.7 385.3L768.7 388.1L764.2 386.6Z" fill="#5e5e5e"/><path d="M768.7 385.3L772.2 382.7L772.2 385.5L768.7 388.1Z" fill="#505050"/><path d="M764.2 383.7L767.8 381.4L772.2 382.7L768.7 385.3Z" fill="#8b8b8b"/>
<path d="M750.7 397.9L755.2 399.4L755.2 402.3L750.7 400.7Z" fill="#5e5e5e"/><path d="M755.2 399.4L758.7 396.9L758.7 399.7L755.2 402.3Z" fill="#505050"/><path d="M750.7 397.9L754.3 395.6L758.7 396.9L755.2 399.4Z" fill="#8b8b8b"/>
<path d="M744.3 404.3L748.8 405.9L748.8 408.7L744.3 407.2Z" fill="#5e5e5e"/><path d="M748.8 405.9L752.3 403.3L752.3 406.1L748.8 408.7Z" fill="#505050"/><path d="M744.3 404.3L747.9 402.0L752.3 403.3L748.8 405.9Z" fill="#8b8b8b"/>
<!-- gizmo -->
<circle cx="745.200" cy="285" r="16" fill="#8f8d9e" opacity=".85"/>
<path d="M757.100 277L805.300 285.900L802.600 302.800L755.400 293Z" fill="url(#gy)"/>
<path d="M811.500 280.500L822.200 294.800L805.300 311.700C801.500 309 800.500 300 802 292C803.500 285 807 280.500 811.500 280.500Z" fill="#6a538a"/>
<path d="M811.500 280.500L822.200 294.800L812 296C810 291 810 285 811.500 280.500Z" fill="#7a629c"/>
<path d="M823.500 292.500L828 291.500L828.500 286.500L836 286L835.500 312L828 313L828 300L823.500 300.500Z" fill="#66508a"/>
<path d="M828.500 286.500L836 286L835.800 290L828.300 290.500Z" fill="#7d66a0"/>
<path d="M737 273.400L737 220.800L754.500 220.800L754.500 273.400C749 276 742 276 737 273.400Z" fill="url(#gz)"/>
<path d="M737 273.400L737 220.800L754.500 220.800L754.500 273.400C749 276 742 276 737 273.400Z" fill="url(#gzv)"/>
<path d="M729.500 217C731 212 740 205 745.600 203C751 205 760 212 762 217C758 222.500 733 222.500 729.500 217Z" fill="#a36d12"/>
<path d="M732.200 194L743 196.500L743.500 187.300L759.300 190.500L759 198L748.500 196.300L748.500 203L732.500 200.500Z" fill="#9c6710"/>
<path d="M745.500 279L752 291L722 313L712 300Z" fill="url(#gx)"/>
<ellipse cx="711.700" cy="311" rx="14" ry="14.500" fill="url(#gxh)"/>
<path d="M692 307L696 305.500L703 316L710 308L713 311L706 322L711 332.500L706.500 334L700.500 325.500L695.500 333L691.500 331L697.500 320Z" fill="#b09870"/>

</svg>
</div></div><!--PLANE_END-->
<!--PANELS_START-->
<!-- scrollbar -->
<div class="abs" style="left:1905px;top:160px;width:15px;height:806px;background:#fcfcfc"></div>
<svg class="abs" style="left:1905px;top:160px" width="15" height="806" viewBox="0 0 15 806" fill="#8b8b8b"><path d="M7.500 5 12 12H3z"/><rect x="3.200" y="187.800" width="8.800" height="601" rx="4.400"/><path d="M7.500 802 12 795H3z"/></svg>
<!-- PANEL 2 (page) -->
<div class="abs gbox" style="left:1285px;top:440px;width:600px;height:497px"></div>
<div class="abs bluehd" style="left:1296px;top:474px;width:578px;height:56px"></div>
<div class="abs hdtxt serif" style="left:1307.500px;top:487.500px"><span style="letter-spacing:-.06px">2. 选择一个预设(align_mag)或创建一个自定义配置使用滑块</span><br>(align_mag_roll, align_mag_pitch, align_mag_yaw)</div>
<div class="abs" id="bigann">罗盘</div>
<div class="abs sel" style="left:1296px;top:535px">CW 270° flip<svg class="abs" style="left:195px;top:7px" width="10" height="7" viewBox="0 0 10 7" fill="none" stroke="#000" stroke-width="1.800"><path d="M1 1.200 5 5.200 9 1.200"/></svg></div>
<div class="abs sellbl serif" style="left:1518px;top:536px">朝向预设 (align_mag),相对于FC方向</div>
<div class="abs hline" style="left:1296px;top:562px;width:578px"></div>
<div class="abs sel" style="left:1296px;top:568px">XYZ（磁力计轴）<svg class="abs" style="left:195px;top:7px" width="10" height="7" viewBox="0 0 10 7" fill="none" stroke="#000" stroke-width="1.800"><path d="M1 1.200 5 5.200 9 1.200"/></svg></div>
<div class="abs sellbl serif" style="left:1518px;top:569px">显示元素</div>
<div class="abs hline" style="left:1296px;top:595px;width:578px"></div>
<div class="abs thb serif" style="left:1298px;top:622px;width:38px">轴</div>
<div class="abs thm" style="left:1358px;top:622px;width:463px;color:#aaa;text-decoration:line-through">align_mag_roll, align_mag_pitch, align_mag_yaw</div>
<div class="abs thb serif" style="left:1838px;top:603.500px;width:40px;line-height:18.300px">数值<br>[角<br>度]</div>
<div class="abs lcell" style="left:1298px;top:669px;width:38px">Roll</div>
<div class="abs track" style="left:1358px;top:669px;width:464px"></div>
<div class="abs ticks" style="left:0;top:696px"><i class="mj" style="left:1357.8px"></i><span style="left:1338.8px">-180</span><i class="mn" style="left:1377.2px"></i><i class="mj" style="left:1396.3px"></i><span style="left:1377.3px">-135</span><i class="mn" style="left:1415.8px"></i><i class="mj" style="left:1434.8px"></i><span style="left:1415.8px">-90</span><i class="mn" style="left:1454.2px"></i><i class="mj" style="left:1473.3px"></i><span style="left:1454.3px">-45</span><i class="mn" style="left:1492.8px"></i><i class="mj" style="left:1511.8px"></i><span style="left:1492.8px">0</span><i class="mn" style="left:1531.2px"></i><i class="mj" style="left:1550.3px"></i><span style="left:1531.3px">45</span><i class="mn" style="left:1569.8px"></i><i class="mj" style="left:1588.8px"></i><span style="left:1569.8px">90</span><i class="mn" style="left:1608.2px"></i><i class="mj" style="left:1627.3px"></i><span style="left:1608.3px">135</span><i class="mn" style="left:1646.8px"></i><i class="mj" style="left:1665.8px"></i><span style="left:1646.8px">180</span><i class="mn" style="left:1685.2px"></i><i class="mj" style="left:1704.3px"></i><span style="left:1685.3px">225</span><i class="mn" style="left:1723.8px"></i><i class="mj" style="left:1742.8px"></i><span style="left:1723.8px">270</span><i class="mn" style="left:1762.2px"></i><i class="mj" style="left:1781.3px"></i><span style="left:1762.3px">315</span><i class="mn" style="left:1800.8px"></i><i class="mj" style="left:1819.8px"></i><span style="left:1800.8px">360</span></div>
<div class="abs handle" style="left:1650.0px;top:664px"><i></i><i style="left:17.5px"></i></div>
<div class="abs inp" style="left:1844px;top:692.5px">180</div>
<div class="abs lcell" style="left:1298px;top:739px;width:38px">Pitch</div>
<div class="abs track" style="left:1358px;top:739px;width:464px"></div>
<div class="abs ticks" style="left:0;top:766px"><i class="mj" style="left:1357.8px"></i><span style="left:1338.8px">-180</span><i class="mn" style="left:1377.2px"></i><i class="mj" style="left:1396.3px"></i><span style="left:1377.3px">-135</span><i class="mn" style="left:1415.8px"></i><i class="mj" style="left:1434.8px"></i><span style="left:1415.8px">-90</span><i class="mn" style="left:1454.2px"></i><i class="mj" style="left:1473.3px"></i><span style="left:1454.3px">-45</span><i class="mn" style="left:1492.8px"></i><i class="mj" style="left:1511.8px"></i><span style="left:1492.8px">0</span><i class="mn" style="left:1531.2px"></i><i class="mj" style="left:1550.3px"></i><span style="left:1531.3px">45</span><i class="mn" style="left:1569.8px"></i><i class="mj" style="left:1588.8px"></i><span style="left:1569.8px">90</span><i class="mn" style="left:1608.2px"></i><i class="mj" style="left:1627.3px"></i><span style="left:1608.3px">135</span><i class="mn" style="left:1646.8px"></i><i class="mj" style="left:1665.8px"></i><span style="left:1646.8px">180</span><i class="mn" style="left:1685.2px"></i><i class="mj" style="left:1704.3px"></i><span style="left:1685.3px">225</span><i class="mn" style="left:1723.8px"></i><i class="mj" style="left:1742.8px"></i><span style="left:1723.8px">270</span><i class="mn" style="left:1762.2px"></i><i class="mj" style="left:1781.3px"></i><span style="left:1762.3px">315</span><i class="mn" style="left:1800.8px"></i><i class="mj" style="left:1819.8px"></i><span style="left:1800.8px">360</span></div>
<div class="abs handle" style="left:1650.0px;top:734px"><i></i><i style="left:17.5px"></i></div>
<div class="abs inp" style="left:1844px;top:762.5px">180</div>
<div class="abs lcell" style="left:1298px;top:809px;width:38px">Yaw</div>
<div class="abs track" style="left:1358px;top:809px;width:464px"></div>
<div class="abs ticks" style="left:0;top:836px"><i class="mj" style="left:1357.8px"></i><span style="left:1338.8px">-180</span><i class="mn" style="left:1377.2px"></i><i class="mj" style="left:1396.3px"></i><span style="left:1377.3px">-135</span><i class="mn" style="left:1415.8px"></i><i class="mj" style="left:1434.8px"></i><span style="left:1415.8px">-90</span><i class="mn" style="left:1454.2px"></i><i class="mj" style="left:1473.3px"></i><span style="left:1454.3px">-45</span><i class="mn" style="left:1492.8px"></i><i class="mj" style="left:1511.8px"></i><span style="left:1492.8px">0</span><i class="mn" style="left:1531.2px"></i><i class="mj" style="left:1550.3px"></i><span style="left:1531.3px">45</span><i class="mn" style="left:1569.8px"></i><i class="mj" style="left:1588.8px"></i><span style="left:1569.8px">90</span><i class="mn" style="left:1608.2px"></i><i class="mj" style="left:1627.3px"></i><span style="left:1608.3px">135</span><i class="mn" style="left:1646.8px"></i><i class="mj" style="left:1665.8px"></i><span style="left:1646.8px">180</span><i class="mn" style="left:1685.2px"></i><i class="mj" style="left:1704.3px"></i><span style="left:1685.3px">225</span><i class="mn" style="left:1723.8px"></i><i class="mj" style="left:1742.8px"></i><span style="left:1723.8px">270</span><i class="mn" style="left:1762.2px"></i><i class="mj" style="left:1781.3px"></i><span style="left:1762.3px">315</span><i class="mn" style="left:1800.8px"></i><i class="mj" style="left:1819.8px"></i><span style="left:1800.8px">360</span></div>
<div class="abs handle" style="left:1573.0px;top:804px"><i></i><i style="left:17.5px"></i></div>
<div class="abs inp" style="left:1844px;top:832.5px">90</div>
<div class="abs hline" style="left:1297px;top:879px;width:577px"></div>
<div class="abs cli" style="left:1297px;top:885.500px;width:577px;letter-spacing:-.02px"><b>CLI:</b> align_mag=CW270FLIP align_mag_roll=0 align_mag_pitch=0 align_mag_yaw=0</div>
<div class="abs note serif" style="left:1300px;top:908px;width:577px">方向由以下方式设置：预设（align_mag）</div>
<div class="abs blackrect" style="left:1819px;top:675px;width:75px;height:201px"></div>

<!-- POPUP with PANEL 1 -->
<div class="abs" id="popup" style="left:1278px;top:67px;width:614px;height:407px"></div>
<div class="abs gbox" style="left:1284px;top:72px;width:600px;height:392px"></div>
<div class="abs bluehd" style="left:1295px;top:88px;width:578px;height:57px"></div>
<div class="abs hdtxt serif" style="left:1307px;top:102px"><span style="letter-spacing:0">1. 选择飞控对齐</span><br>(align_board_roll, align_board_pitch, align_board_yaw)</div>
<div class="abs thb serif" style="left:1297px;top:170.500px;width:38px">轴</div>
<div class="abs thm" style="left:1357px;top:170.500px;width:463px;letter-spacing:.2px">align_board_roll, align_board_pitch, align_board_yaw</div>
<div class="abs thb serif" style="left:1837px;top:152.500px;width:40px;line-height:18px">数值<br>[角<br>度]</div>
<div class="abs lcell" style="left:1297px;top:218px;width:38px">Roll</div>
<div class="abs track" style="left:1357px;top:218px;width:464px"></div>
<div class="abs ticks" style="left:0;top:245px"><i class="mj" style="left:1356.9px"></i><span style="left:1337.9px">-180</span><i class="mn" style="left:1376.4px"></i><i class="mj" style="left:1395.4px"></i><span style="left:1376.4px">-135</span><i class="mn" style="left:1414.9px"></i><i class="mj" style="left:1433.9px"></i><span style="left:1414.9px">-90</span><i class="mn" style="left:1453.4px"></i><i class="mj" style="left:1472.4px"></i><span style="left:1453.4px">-45</span><i class="mn" style="left:1491.9px"></i><i class="mj" style="left:1510.9px"></i><span style="left:1491.9px">0</span><i class="mn" style="left:1530.4px"></i><i class="mj" style="left:1549.4px"></i><span style="left:1530.4px">45</span><i class="mn" style="left:1568.9px"></i><i class="mj" style="left:1587.9px"></i><span style="left:1568.9px">90</span><i class="mn" style="left:1607.4px"></i><i class="mj" style="left:1626.4px"></i><span style="left:1607.4px">135</span><i class="mn" style="left:1645.9px"></i><i class="mj" style="left:1664.9px"></i><span style="left:1645.9px">180</span><i class="mn" style="left:1684.4px"></i><i class="mj" style="left:1703.4px"></i><span style="left:1684.4px">225</span><i class="mn" style="left:1722.9px"></i><i class="mj" style="left:1741.9px"></i><span style="left:1722.9px">270</span><i class="mn" style="left:1761.4px"></i><i class="mj" style="left:1780.4px"></i><span style="left:1761.4px">315</span><i class="mn" style="left:1799.9px"></i><i class="mj" style="left:1818.9px"></i><span style="left:1799.9px">360</span></div>
<div class="abs handle" style="left:1649.1px;top:213px"><i></i><i style="left:17.5px"></i></div>
<div class="abs inp" style="left:1843px;top:241.5px">180</div>
<div class="abs lcell" style="left:1297px;top:288px;width:38px">Pitch</div>
<div class="abs track" style="left:1357px;top:288px;width:464px"></div>
<div class="abs ticks" style="left:0;top:315px"><i class="mj" style="left:1356.9px"></i><span style="left:1337.9px">-180</span><i class="mn" style="left:1376.4px"></i><i class="mj" style="left:1395.4px"></i><span style="left:1376.4px">-135</span><i class="mn" style="left:1414.9px"></i><i class="mj" style="left:1433.9px"></i><span style="left:1414.9px">-90</span><i class="mn" style="left:1453.4px"></i><i class="mj" style="left:1472.4px"></i><span style="left:1453.4px">-45</span><i class="mn" style="left:1491.9px"></i><i class="mj" style="left:1510.9px"></i><span style="left:1491.9px">0</span><i class="mn" style="left:1530.4px"></i><i class="mj" style="left:1549.4px"></i><span style="left:1530.4px">45</span><i class="mn" style="left:1568.9px"></i><i class="mj" style="left:1587.9px"></i><span style="left:1568.9px">90</span><i class="mn" style="left:1607.4px"></i><i class="mj" style="left:1626.4px"></i><span style="left:1607.4px">135</span><i class="mn" style="left:1645.9px"></i><i class="mj" style="left:1664.9px"></i><span style="left:1645.9px">180</span><i class="mn" style="left:1684.4px"></i><i class="mj" style="left:1703.4px"></i><span style="left:1684.4px">225</span><i class="mn" style="left:1722.9px"></i><i class="mj" style="left:1741.9px"></i><span style="left:1722.9px">270</span><i class="mn" style="left:1761.4px"></i><i class="mj" style="left:1780.4px"></i><span style="left:1761.4px">315</span><i class="mn" style="left:1799.9px"></i><i class="mj" style="left:1818.9px"></i><span style="left:1799.9px">360</span></div>
<div class="abs handle" style="left:1495.1px;top:283px"><i></i><i style="left:17.5px"></i></div>
<div class="abs inp" style="left:1843px;top:311.5px">0</div>
<div class="abs lcell" style="left:1297px;top:358px;width:38px">Yaw</div>
<div class="abs track" style="left:1357px;top:358px;width:464px"></div>
<div class="abs ticks" style="left:0;top:385px"><i class="mj" style="left:1356.9px"></i><span style="left:1337.9px">-180</span><i class="mn" style="left:1376.4px"></i><i class="mj" style="left:1395.4px"></i><span style="left:1376.4px">-135</span><i class="mn" style="left:1414.9px"></i><i class="mj" style="left:1433.9px"></i><span style="left:1414.9px">-90</span><i class="mn" style="left:1453.4px"></i><i class="mj" style="left:1472.4px"></i><span style="left:1453.4px">-45</span><i class="mn" style="left:1491.9px"></i><i class="mj" style="left:1510.9px"></i><span style="left:1491.9px">0</span><i class="mn" style="left:1530.4px"></i><i class="mj" style="left:1549.4px"></i><span style="left:1530.4px">45</span><i class="mn" style="left:1568.9px"></i><i class="mj" style="left:1587.9px"></i><span style="left:1568.9px">90</span><i class="mn" style="left:1607.4px"></i><i class="mj" style="left:1626.4px"></i><span style="left:1607.4px">135</span><i class="mn" style="left:1645.9px"></i><i class="mj" style="left:1664.9px"></i><span style="left:1645.9px">180</span><i class="mn" style="left:1684.4px"></i><i class="mj" style="left:1703.4px"></i><span style="left:1684.4px">225</span><i class="mn" style="left:1722.9px"></i><i class="mj" style="left:1741.9px"></i><span style="left:1722.9px">270</span><i class="mn" style="left:1761.4px"></i><i class="mj" style="left:1780.4px"></i><span style="left:1761.4px">315</span><i class="mn" style="left:1799.9px"></i><i class="mj" style="left:1818.9px"></i><span style="left:1799.9px">360</span></div>
<div class="abs handle" style="left:1495.1px;top:353px"><i></i><i style="left:17.5px"></i></div>
<div class="abs inp" style="left:1843px;top:381.5px">0</div>
<div class="abs hline" style="left:1295px;top:428px;width:578px"></div>
<div class="abs cli" style="left:1295px;top:434px;width:578px"><b>CLI:</b> align_board_roll=1800 align_board_pitch=0 align_board_yaw=0</div>
<div class="abs blackrect" style="left:1825px;top:224px;width:65px;height:192px"></div>
<!--PANELS_END-->
<div id="footer" class="abs"></div>
<div id="savebtn" class="abs serif">保存并重启</div>
</body>
</html>
